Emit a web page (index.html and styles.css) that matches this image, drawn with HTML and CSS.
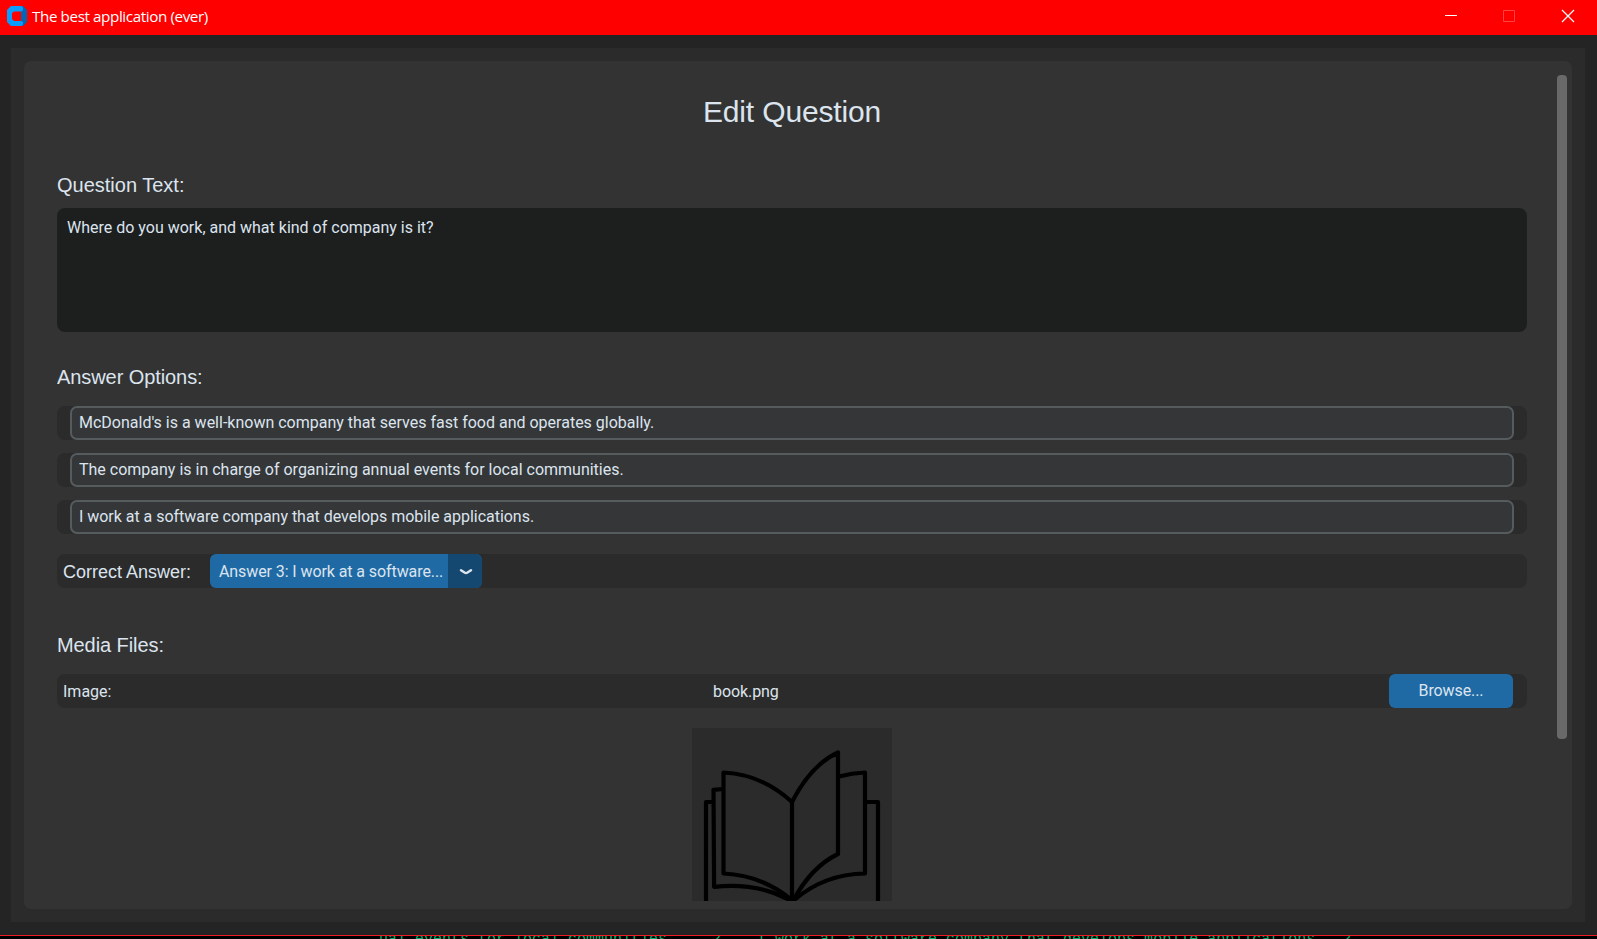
FILE: index.html
```
<!DOCTYPE html>
<html lang="en">
<head>
<meta charset="utf-8">
<title>The best application (ever)</title>
<link rel="stylesheet" href="styles.css">
</head>
<body>
<div class="window">
  <header class="titlebar">
    <svg class="app-icon" width="20" height="20" viewBox="0 0 20 20"><path d="M14 0h2l4 4v12l-4 4h-2z" fill="#0567b4"/><path fill-rule="evenodd" d="M4 0h10.500L16 1.500V4l-1.500 1.500H7L5 7v6l2 2h7.500L16 16.500v2L14.500 20H4l-4-4V4z" fill="#0a9cff"/></svg>
    <span class="app-title">The best application (ever)</span>
    <svg class="controls" width="140" height="35" viewBox="0 0 140 35" fill="none" stroke="#fff"><path d="M8 15.500h12"/><path d="M66.500 10.500h11v11h-11z" stroke="#ff4343"/><path d="M125 10l12 12M137 10l-12 12" stroke-width="1.200"/></svg>
  </header>
  <main class="outer">
    <section class="panel">
      <div class="form">
        <h1 class="heading">Edit Question</h1>
        <h2 class="label">Question Text:</h2>
        <div class="textbox">Where do you work, and what kind of company is it?</div>
        <h2 class="label label-answers">Answer Options:</h2>
        <div class="row"><div class="entry">McDonald's is a well-known company that serves fast food and operates globally.</div></div>
        <div class="row"><div class="entry">The company is in charge of organizing annual events for local communities.</div></div>
        <div class="row"><div class="entry entry-tight">I work at a software company that develops mobile applications.</div></div>
        <div class="row row-correct">
          <span class="row-label row-label-large">Correct Answer:</span>
          <div class="select">
            <span class="select-text">Answer 3: I work at a software...</span>
            <span class="select-arrow"><svg width="14" height="8" viewBox="0 0 14 8"><path d="M2 2.200l3.500 2.300q1.500 .8 3 0L12 2.200" fill="none" stroke="#dce4ee" stroke-width="2.500" stroke-linecap="round"/></svg></span>
          </div>
        </div>
        <h2 class="label label-media">Media Files:</h2>
        <div class="row row-media">
          <span class="row-label">Image:</span>
          <span class="file">book.png</span>
          <button class="browse">Browse...</button>
        </div>
        <svg class="preview" width="200" height="173" viewBox="0 0 200 173" fill="none" stroke="#000" stroke-width="4.200" stroke-linejoin="round">
          <path d="M31.500 44.500Q69 46 100 74Q119 37 146 24.500V126Q119 139 101 173Q70 147 31.500 145.500Z"/>
          <path d="M100 74V173"/>
          <path d="M31 61l-9.500 .8.600 97Q67 154 100 173.500"/>
          <path d="M21 74h-7V175"/>
          <path d="M147 48.500Q160 45 173 44.500V145.500Q132 146 101 173"/>
          <path d="M174 74h12V175"/>
        </svg>
      </div>
      <div class="scrollbar"></div>
    </section>
  </main>
</div>
<footer class="terminal"><div class="terminal-text">ual events for local communities. .  2 .  I work at a software company that develops mobile applications.  2</div></footer>
</body>
</html>
```
FILE: styles.css
```
* { box-sizing: border-box; }
body {
  margin: 0;
  width: 1597px;
  height: 939px;
  overflow: hidden;
  background: #000;
  color: #dce4ee;
  font-family: Roboto, sans-serif;
}
.window {
  display: flex;
  flex-direction: column;
  height: 936px;
  background: #242424;
  border-bottom: 1px solid #ec1c24;
}
.titlebar {
  display: flex;
  align-items: center;
  flex: none;
  height: 35px;
  padding-left: 7px;
  background: #f00;
  color: #fff;
}
.app-icon { margin-bottom: 3px; }
.app-title {
  flex: 1;
  margin: 0 0 3px 5px;
  font: 15.200px "Open Sans", "Noto Sans", sans-serif;
  letter-spacing: -0.390px;
}
.controls { margin-right: 20px; }
.outer {
  flex: 1;
  margin: 13px 12px 13px 11px;
  padding: 13px;
  background: #2b2b2b;
}
.panel {
  display: flex;
  justify-content: space-between;
  height: 848px;
  padding: 14px 5px 8px 33px;
  background: #333;
  border-radius: 7px;
}
.form {
  display: flex;
  flex-direction: column;
  width: 1470px;
  height: 826px;
  overflow: hidden;
}
.scrollbar {
  width: 10px;
  height: 664px;
  border-radius: 4px;
  background: #696969;
}
.heading {
  margin: 19px 0 0;
  font: 30px/36px "Liberation Sans", Arial, sans-serif;
  letter-spacing: -0.150px;
  text-align: center;
}
.label {
  margin: 43px 0 0;
  font: 20px/24px "Liberation Sans", Arial, sans-serif;
}
.textbox {
  height: 124px;
  margin-top: 11px;
  padding: 10px;
  border-radius: 8px;
  background: #1d1e1e;
  font-size: 16px;
  line-height: 20px;
}
.label-answers { margin-top: 33px; letter-spacing: -0.080px; }
.row {
  display: flex;
  flex: none;
  align-items: center;
  height: 34px;
  margin-top: 13px;
  padding: 0 13px;
  border-radius: 8px;
  background: #2b2b2b;
  font-size: 16px;
}
.label-answers + .row { margin-top: 17px; }
.entry {
  flex: 1;
  height: 34px;
  padding: 0 7px;
  border: 2px solid #565b5e;
  border-radius: 7px;
  background: #343638;
  line-height: 29px;
}
.entry-tight { letter-spacing: -0.030px; }
.row-correct { margin-top: 20px; padding: 0 6px; }
.row-label { width: 147px; }
.row-label-large { font: 18px/34px "Liberation Sans", Arial, sans-serif; padding-top: 1px; }
.select {
  display: flex;
  width: 272px;
  height: 34px;
  border-radius: 6px;
  overflow: hidden;
  background: #1f6aa5;
  line-height: 35px;
}
.select-text { width: 238px; padding-left: 9px; white-space: nowrap; letter-spacing: -0.090px; }
.select-arrow {
  display: flex;
  align-items: center;
  justify-content: center;
  flex: 1;
  padding: 2px 0 0 2px;
  background: #144870;
}
.label-media { margin-top: 45px; letter-spacing: -0.080px; }
.row-media { margin-top: 17px; padding: 0 14px 0 6px; }
.file { flex: 1; padding-left: 503px; letter-spacing: -0.080px; }
.browse {
  width: 124px;
  height: 34px;
  padding: 0 0 2px;
  border: 0;
  border-radius: 6px;
  background: #1f6aa5;
  color: #dce4ee;
  font: 16px Roboto, sans-serif;
  letter-spacing: -0.100px;
}
.preview {
  flex: none;
  align-self: center;
  margin-top: 20px;
  background: #2b2b2b;
}
.terminal {
  height: 3px;
  overflow: hidden;
  padding-left: 379px;
}
.terminal-text {
  margin-top: -5px;
  color: #0fae6c;
  font: 15px/17px "Liberation Mono", monospace;
  white-space: pre;
}
```
